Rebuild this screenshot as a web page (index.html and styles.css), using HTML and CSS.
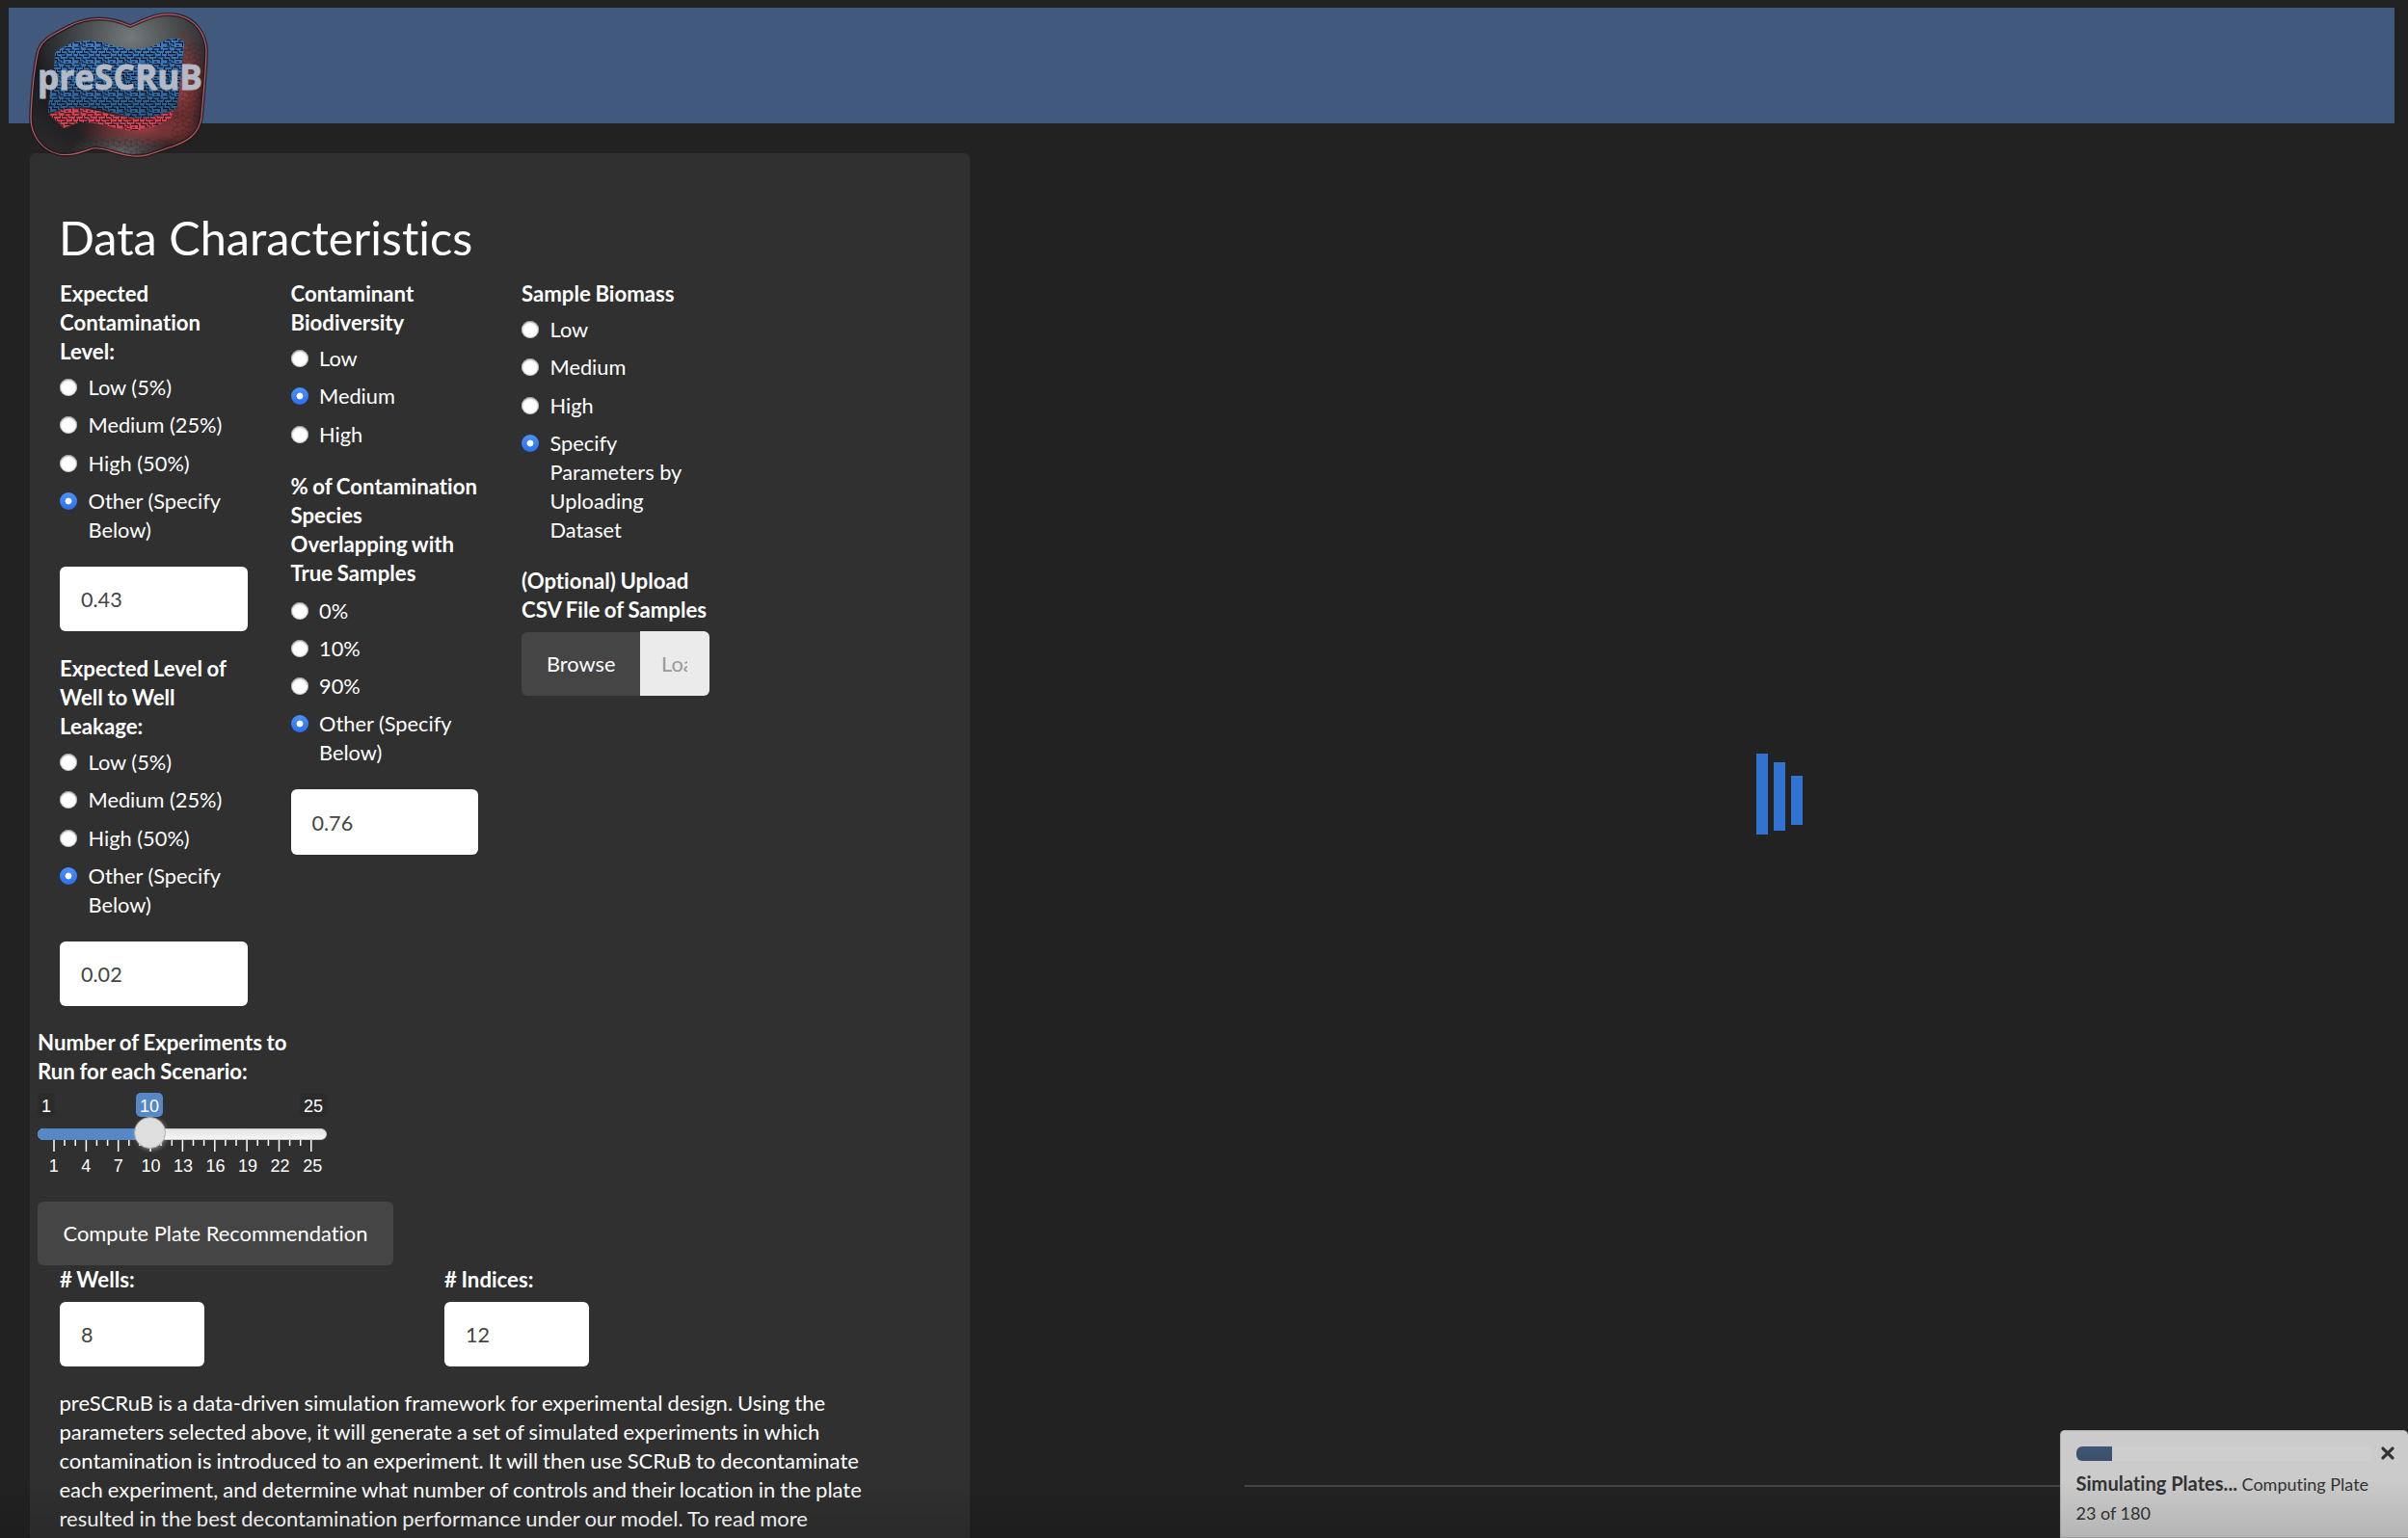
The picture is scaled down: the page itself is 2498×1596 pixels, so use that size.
FILE: index.html
```html
<!DOCTYPE html>
<html lang="en">
<head>
<meta charset="utf-8">
<title>preSCRuB</title>
<link rel="stylesheet" href="styles.css">
</head>
<body>
<header class="banner">
  <svg class="logo" viewBox="0 0 186 154" width="186" height="154" role="img">
    <defs>
      <radialGradient id="shell" cx="0.56" cy="0.16" r="0.9">
        <stop offset="0" stop-color="#74797c"/>
        <stop offset="0.3" stop-color="#474b4e"/>
        <stop offset="0.62" stop-color="#1b1b1e"/>
        <stop offset="1" stop-color="#2a2a2c"/>
      </radialGradient>
      <radialGradient id="glow" cx="0.5" cy="0.5" r="0.5">
        <stop offset="0" stop-color="#b84648" stop-opacity="0.8"/>
        <stop offset="0.55" stop-color="#93393b" stop-opacity="0.55"/>
        <stop offset="1" stop-color="#70282a" stop-opacity="0"/>
      </radialGradient>
      <radialGradient id="base" cx="0.5" cy="0.5" r="0.5">
        <stop offset="0" stop-color="#777b7d" stop-opacity="0.8"/>
        <stop offset="1" stop-color="#55585a" stop-opacity="0"/>
      </radialGradient>
      <linearGradient id="shade" x1="0" y1="0" x2="0" y2="1">
        <stop offset="0" stop-color="#3d80ca"/>
        <stop offset="1" stop-color="#2a5c8c"/>
      </linearGradient>
      <pattern id="weave" width="23" height="17" patternUnits="userSpaceOnUse">
        <path d="M0 1.2h5M8 .8h4M14 1.6h6M2 4.2h6M11 4.6h4M18 4.2h5M0 7.4h3M6 7.6h7M16 7.2h4M3 10.6h4M10 10.4h5M18 10.8h5M0 13.6h5M8 13.8h3M13 13.4h7M4 16h5M14 16.2h3M1.5 4v3M6 0v4M13 1v4M20 1v3M9.5 4v3M16 4v3M4.5 7v3.5M14 7v3.5M21.5 7v3.5M8 10v4M17 10v3M1 10v3M11 13v3M5.5 13v3M20.5 13v4" stroke="#0c1119" stroke-width="1.1" fill="none"/>
      </pattern>
      <pattern id="cells" width="12" height="10" patternUnits="userSpaceOnUse">
        <path d="M0 1h5l2 2h5M3 1v5l3 2h6M9 3v5M0 6h3M6 8v2" stroke="#301818" stroke-width="0.7" fill="none" opacity=".5"/>
      </pattern>
      <clipPath id="edge"><path d="M8 42C11 27 23 23 39 14C58 4 80 2 104 13C121 6 134-2 154 2C172 6 182 21 183 38C183 54 180 83 178 107C176 126 162 133 148 138C134 142 123 149 107 148C88 146 76 138 65 140C53 144 44 148 30 146C12 142 1 126 1 108C2 83 4 61 8 42Z"/></clipPath>
    </defs>
    <g clip-path="url(#edge)">
      <rect width="186" height="154" fill="url(#shell)"/>
      <ellipse cx="158" cy="78" rx="28" ry="66" fill="url(#glow)"/>
      <ellipse cx="116" cy="120" rx="70" ry="23" fill="url(#glow)"/>
      <ellipse cx="94" cy="144" rx="55" ry="23" fill="url(#base)"/>
      <path d="M158 30h28v124H34v-25h112z" fill="url(#cells)"/>
    </g>
    <path d="M8 42C11 27 23 23 39 14C58 4 80 2 104 13C121 6 134-2 154 2C172 6 182 21 183 38C183 54 180 83 178 107C176 126 162 133 148 138C134 142 123 149 107 148C88 146 76 138 65 140C53 144 44 148 30 146C12 142 1 126 1 108C2 83 4 61 8 42Z" fill="none" stroke="#1d171d" stroke-opacity=".7" stroke-width="4"/>
    <path d="M8 42C11 27 23 23 39 14C58 4 80 2 104 13C121 6 134-2 154 2C172 6 182 21 183 38C183 54 180 83 178 107C176 126 162 133 148 138C134 142 123 149 107 148C88 146 76 138 65 140C53 144 44 148 30 146C12 142 1 126 1 108C2 83 4 61 8 42Z" fill="none" stroke="#c5575b" stroke-width="1.2"/>
    <path d="M26 41C42 27 61 26 79 31C99 38 118 40 136 30C145 25 159 23 160 32L153 98C141 104 126 109 109 108C83 103 65 95 43 98L19 103C19 83 26 62 26 41Z" fill="url(#shade)"/>
    <path d="M26 41C42 27 61 26 79 31C99 38 118 40 136 30C145 25 159 23 160 32L153 98C141 104 126 109 109 108C83 103 65 95 43 98L19 103C19 83 26 62 26 41Z" fill="url(#weave)"/>
    <path d="M20 105C31 99 45 97 59 99C82 102 101 112 123 108C135 106 142 102 149 101L146 109C132 118 118 121 106 122C87 119 69 112 51 113L35 119Z" fill="#d84353"/>
    <path d="M20 105C31 99 45 97 59 99C82 102 101 112 123 108C135 106 142 102 149 101L146 109C132 118 118 121 106 122C87 119 69 112 51 113L35 119Z" fill="url(#weave)" opacity=".9"/>
    <text class="logo-text" x="8" y="79" textLength="171" lengthAdjust="spacingAndGlyphs">preSCRuB</text>
  </svg>
</header>

<div class="layout">
  <form class="well">
    <h2>Data Characteristics</h2>
    <div class="columns">
      <div class="column">
        <fieldset class="group">
          <legend>Expected Contamination Level:</legend>
          <label class="radio"><input type="radio" name="contam"><span>Low (5%)</span></label>
          <label class="radio"><input type="radio" name="contam"><span>Medium (25%)</span></label>
          <label class="radio"><input type="radio" name="contam"><span>High (50%)</span></label>
          <label class="radio"><input type="radio" name="contam" checked><span>Other (Specify Below)</span></label>
        </fieldset>
        <input class="field" type="text" value="0.43">
        <fieldset class="group">
          <legend>Expected Level of<br>Well to Well Leakage:</legend>
          <label class="radio"><input type="radio" name="leak"><span>Low (5%)</span></label>
          <label class="radio"><input type="radio" name="leak"><span>Medium (25%)</span></label>
          <label class="radio"><input type="radio" name="leak"><span>High (50%)</span></label>
          <label class="radio"><input type="radio" name="leak" checked><span>Other (Specify Below)</span></label>
        </fieldset>
        <input class="field" type="text" value="0.02">
      </div>
      <div class="column">
        <fieldset class="group">
          <legend>Contaminant Biodiversity</legend>
          <label class="radio"><input type="radio" name="bio"><span>Low</span></label>
          <label class="radio"><input type="radio" name="bio" checked><span>Medium</span></label>
          <label class="radio"><input type="radio" name="bio"><span>High</span></label>
        </fieldset>
        <fieldset class="group">
          <legend>% of Contamination<br>Species<br>Overlapping with<br>True Samples</legend>
          <label class="radio"><input type="radio" name="overlap"><span>0%</span></label>
          <label class="radio"><input type="radio" name="overlap"><span>10%</span></label>
          <label class="radio"><input type="radio" name="overlap"><span>90%</span></label>
          <label class="radio"><input type="radio" name="overlap" checked><span>Other (Specify Below)</span></label>
        </fieldset>
        <input class="field" type="text" value="0.76">
      </div>
      <div class="column">
        <fieldset class="group">
          <legend>Sample Biomass</legend>
          <label class="radio"><input type="radio" name="mass"><span>Low</span></label>
          <label class="radio"><input type="radio" name="mass"><span>Medium</span></label>
          <label class="radio"><input type="radio" name="mass"><span>High</span></label>
          <label class="radio"><input type="radio" name="mass" checked><span>Specify Parameters by Uploading Dataset</span></label>
        </fieldset>
        <div class="upload-label">(Optional) Upload<br>CSV File of Samples</div>
        <div class="upload">
          <span class="browse">Browse</span>
          <div class="filename"><span>Load</span></div>
        </div>
      </div>
    </div>

    <div class="runs">
      <div class="runs-label">Number of Experiments to Run for each Scenario:</div>
      <div class="slider">
        <div class="bubbles"><span>1</span><span class="current">10</span><span>25</span></div>
        <div class="track"><div class="fill"></div><div class="handle"></div></div>
        <svg class="ticks" width="300" height="12" viewBox="0 0 300 12">
          <path d="M17 0v12M50.4 0v12M83.7 0v12M117.1 0v12M150.4 0v12M183.8 0v12M217.1 0v12M250.5 0v12M283.8 0v12" stroke="#fff" stroke-width="1.5"/>
          <path d="M28 0v6M39.2 0v6M61.4 0v6M72.6 0v6M94.8 0v6M106 0v6M128 0v6M139.3 0v6M161.5 0v6M172.6 0v6M194.9 0v6M206 0v6M228.2 0v6M239.4 0v6M261.6 0v6M272.7 0v6" stroke="#fff" stroke-width="1.5"/>
        </svg>
        <div class="scale"><span>1</span><span>4</span><span>7</span><span>10</span><span>13</span><span>16</span><span>19</span><span>22</span><span>25</span></div>
      </div>
      <button class="button" type="button">Compute Plate Recommendation</button>
    </div>

    <div class="plate">
      <label>#&nbsp;Wells:<input class="field" type="text" value="8"></label>
      <label>#&nbsp;Indices:<input class="field" type="text" value="12"></label>
    </div>
    <p class="about">preSCRuB is a data-driven simulation framework for experimental design. Using the<br>parameters selected above, it will generate a set of simulated experiments in which<br>contamination is introduced to an experiment. It will then use SCRuB to decontaminate<br>each experiment, and determine what number of controls and their location in the plate<br>resulted in the best decontamination performance under our model. To read more</p>
  </form>

  <main class="output">
    <div class="loader"><i></i><i></i><i></i></div>
    <hr>
  </main>
</div>

<aside class="notice">
  <div class="notice-top">
    <div class="progress"><div class="progress-bar" style="width:12.3%"></div></div>
    <svg class="close" width="14" height="14" viewBox="0 0 14 14"><path d="M2 2l10 10M12 2L2 12" stroke="#333" stroke-width="3.2" stroke-linecap="round"/></svg>
  </div>
  <p><b>Simulating Plates...</b> Computing Plate<br>23 of 180</p>
</aside>
<div class="fade"></div>
</body>
</html>
```
FILE: styles.css
```css
* { box-sizing: border-box; }
body {
  margin: 0;
  height: 1596px;
  overflow: hidden;
  background: #222;
  color: #fff;
  font: 21.8px/30px Lato, sans-serif;
  font-variant-ligatures: none;
  padding: 8px 14px 0 9px;
}
.banner { height: 120px; background: #40597c; padding: 6px 0 0 22px; }
.logo { display: block; position: relative; z-index: 2; overflow: visible; }
.logo-text { font: bold 35px "Open Sans", Lato, sans-serif; fill: #b4bac5; stroke: #b4bac5; stroke-width: .8px; }

.layout { display: flex; padding: 31px 0 0 22px; }
.well {
  width: 975px;
  height: 1500px;
  flex: none;
  background: #303030;
  border-radius: 6px;
  padding: 61px 30px 0 31px;
}
h2 { margin: 0 0 16.5px -1px; font-size: 48.6px; font-weight: 400; line-height: 53px; }
.columns { display: grid; grid-template-columns: repeat(3, 194.5px); column-gap: 45px; height: 777.5px; }
.group { border: 0; margin: 0 0 23.5px; padding: 0; min-width: 0; }
.group + .group { padding-top: 1px; }
.group legend { display: block; padding: 0; margin-bottom: 7.5px; }
.group + .group legend { padding-top: 1px; }
.group legend, .runs-label, .upload-label, .plate label { font-size: 22.2px; font-weight: 700; word-spacing: -.8px; white-space: normal; }
.radio { display: flex; gap: 12px; margin-bottom: 9.3px; }
.radio span { margin-left: -.5px; }
.group .radio:last-child { margin-bottom: 0; }
.radio input {
  appearance: none;
  flex: none;
  width: 18px;
  height: 18px;
  margin: 6px 0 0;
  border-radius: 50%;
  background: #fff;
  box-shadow: inset 0 0 2px #777, inset 0 1px 2px #999;
}
.radio input:checked { background: radial-gradient(circle, #fff 3px, transparent 3.8px), linear-gradient(#4b93f8, #2a6ff0); box-shadow: none; }
.field {
  display: block;
  width: 100%;
  height: 67.5px;
  border: 0;
  border-radius: 6px;
  background: #fff;
  color: #464545;
  font: 21.6px/30px Lato, sans-serif;
  padding: 2px 22px 0;
}
.group + .field { margin-top: -.9px; }
.field + .group { margin-top: 23.5px; }
.upload-label { margin-bottom: 6.5px; white-space: nowrap; }
.upload { display: flex; height: 67px; }
.browse { flex: none; width: 123px; background: #464545; border-radius: 6px 0 0 6px; padding: 18.5px 0 0 26px; margin-top: 1px; }
.filename { flex: 1; min-width: 0; background: #ebebeb; border-radius: 0 6px 6px 0; color: #999; padding: 19.5px 23px 0 22px; }
.filename span { display: block; overflow: hidden; }

.runs { margin-left: -23px; height: 238px; }
.runs-label { width: 280px; }
.slider { width: 300px; margin-top: 7px; font: 18px/24px "Liberation Sans", Arial, sans-serif; }
.bubbles { display: grid; grid-template-columns: 102px 1fr auto; justify-items: start; }
.bubbles span { background: #2b2b2b; border-radius: 5px; padding: 2px 4px 0; height: 25px; font-size: 18px; line-height: 24px; }
.bubbles .current { background: #5588c4; }
.track { position: relative; height: 12px; margin-top: 12px; border: 1.5px solid #ccc; border-radius: 12px; background: linear-gradient(#e4e4e4, #f6f6f6); }
.fill { position: absolute; left: -1.5px; top: -1.5px; height: 12px; width: 117px; background: #5588c4; border-radius: 12px 0 0 12px; }
.handle { position: absolute; left: 98.5px; top: -13px; width: 33px; height: 33px; border: 1.5px solid #ababab; border-radius: 50%; background: #dedede; box-shadow: 1.5px 1.5px 4px rgba(255,255,255,.3); }
.ticks { display: block; }
.scale { display: flex; margin: 3px 0 0; }
.scale span { flex: none; width: 33.55px; text-align: center; }
.button { display: block; margin: 24.5px 0 0; width: 369px; height: 66px; border: 0; border-radius: 6px; background: #464545; color: #fff; font: 21.9px/30px Lato, sans-serif; font-variant-ligatures: none; padding: 0; }

.plate { display: flex; gap: 249px; margin-top: 8px; }
.plate label { width: 150px; }
.plate .field { margin-top: 7.5px; }
.about { margin: 22.5px 0 0 -.5px; white-space: nowrap; font-size: 22px; word-spacing: -.6px; }

.output { flex: 1; display: flex; flex-direction: column; padding: 623px 0 0 285px; }
.loader { display: flex; align-items: flex-start; gap: 6px; height: 84px; margin-left: 531px; }
.loader i { width: 12px; height: 84px; background: #3273d2; }
.loader i:nth-child(2) { height: 71px; margin-top: 9px; }
.loader i:nth-child(3) { height: 51px; margin-top: 23px; }
.output hr { width: 100%; border: 0; height: 2px; background: #464545; margin: 675px 0 0; }

.notice { position: fixed; right: 0; bottom: 0; width: 361px; height: 112px; border: 1.5px solid #b0b0b0; border-right: 0; border-radius: 5px 5px 0 0; background: #cbcbcb; color: #333; padding: 15.5px 14px 0 15.5px; font-size: 18px; line-height: 30px; }
.notice b { font-size: 20.1px; }
.notice-top { display: flex; gap: 8px; }
.progress { width: 310px; height: 15px; border-radius: 6px; background: #cecece; overflow: hidden; }
.progress-bar { height: 100%; background: linear-gradient(#3f5677, #3b4f6c); }
.notice p { margin: 8px 0 0; white-space: nowrap; }
.fade { position: fixed; left: 0; right: 0; bottom: 0; height: 60px; background: linear-gradient(transparent, rgba(0,0,0,.11)); pointer-events: none; }
```
